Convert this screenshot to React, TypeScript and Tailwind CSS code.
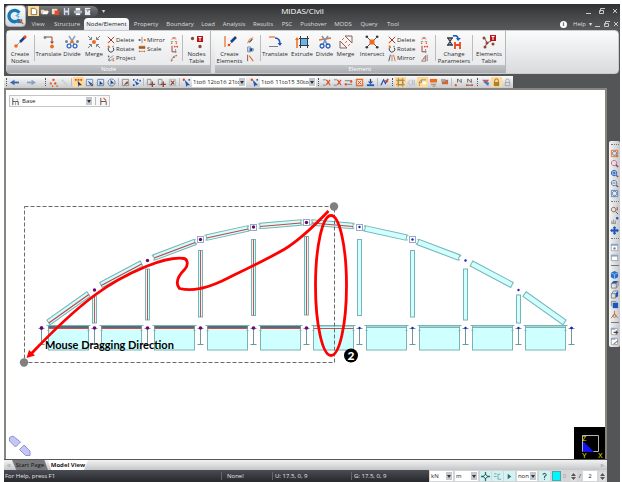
import type { ReactNode } from "react"
import { clsx } from "clsx"

const RED = "#e8481c"
const ORANGE = "#ee6a1f"
const BLUE = "#1d55b8"
const NAVY = "#1c3f8c"
const GRAY = "#7d8288"
const DARK = "#333b47"
const BROWN = "#8a4a38"

// d = path, c = colour, w = stroke width (no width means filled)
type Shape = { d: string; c: string; w?: number }

const dot = (x: number, y: number, r: number, c: string): Shape => ({
  d: `M${x - r} ${y}a${r} ${r} 0 1 0 ${r * 2} 0a${r} ${r} 0 1 0 ${-r * 2} 0`,
  c,
})

const big: Record<string, Shape[]> = {
  createNodes: [
    { d: "M3 11L9 5", c: "#9aa5b5", w: 1 },
    { d: "M7 7L12 2", c: NAVY, w: 2.5 },
    { d: "M11 3L13 1", c: RED, w: 2.5 },
    dot(3, 11, 1.8, ORANGE),
  ],
  translateNodes: [
    { d: "M4 2H10V7", c: BROWN, w: 1 },
    { d: "M8 6.500h4l-2 2.500z", c: BROWN },
    dot(3, 2.5, 1.4, GRAY),
    dot(10, 11.5, 1.9, ORANGE),
  ],
  divideNodes: [
    { d: "M4 1L9 9M10 1L5 9", c: "#8fa3bb", w: 1.5 },
    { d: "M4 9a2 2 0 1 0 .1 0M10 9a2 2 0 1 0 .1 0", c: BLUE, w: 1.2 },
    dot(1.5, 6.5, 1.5, GRAY),
    dot(12.5, 6.5, 1.5, GRAY),
    dot(7, 6.5, 1.6, ORANGE),
  ],
  mergeNodes: [
    { d: "M1 1L4.500 4.500M13 1L9.500 4.500M1 13L4.500 9.500M13 13L9.500 9.500", c: GRAY, w: 1 },
    { d: "M2 4.500H4.500V2M12 4.500H9.500V2M2 9.500H4.500V12M12 9.500H9.500V12", c: GRAY, w: 1 },
    dot(7, 7, 2, ORANGE),
  ],
  nodesTable: [
    { d: "M7 1h6v6H7z", c: "#b5161b" },
    { d: "M8.500 2.500h3M10 2.500V6", c: "#fff", w: 1 },
    dot(2.5, 3.5, 1.7, BROWN),
    dot(10, 11.5, 1.7, BROWN),
  ],
  createElements: [
    { d: "M2 1V12", c: ORANGE, w: 1.2 },
    { d: "M6 10L9 7", c: "#9aa5b5", w: 1 },
    { d: "M8 7L13 2", c: NAVY, w: 2.6 },
    dot(6, 10, 1.3, RED),
  ],
  translateElements: [
    { d: "M1 2H7", c: ORANGE, w: 1.2 },
    { d: "M7 3c4 0 5 2 5 6", c: BLUE, w: 1.6 },
    { d: "M9.500 8h4.500l-2 3z", c: BLUE },
    { d: "M1 11.500H10", c: GRAY, w: 1 },
  ],
  extrude: [
    { d: "M2 13V4", c: ORANGE, w: 1.5 },
    { d: "M0 5h4l-2-3z", c: ORANGE },
    { d: "M5.500 3.500h7v7h-7z", c: "#6cb4e8" },
    { d: "M5.500 1v12M12.500 1v12M4 3.500h10M4 10.500h10", c: DARK, w: 1 },
  ],
  divideElements: [
    { d: "M1 5L13 3", c: ORANGE, w: 1.5 },
    { d: "M4 1L9 9M10 1L5 9", c: "#7893b6", w: 1.5 },
    { d: "M4 9a2 2 0 1 0 .1 0M10 9a2 2 0 1 0 .1 0", c: BLUE, w: 1.3 },
  ],
  mergeElements: [
    { d: "M1 6V13H8zM6 1H13V8z", c: "#8b6060", w: 1 },
    { d: "M8 6L6 8M3 5L5 3M9 11L11 9", c: ORANGE, w: 1 },
  ],
  intersect: [
    { d: "M2 2L12 12M12 2L2 12", c: "#53565b", w: 1 },
    { d: "M4.500 4.500h5v5h-5z", c: ORANGE },
    dot(1.8, 1.8, 1.3, DARK),
    dot(12.2, 1.8, 1.3, DARK),
    dot(1.8, 12.2, 1.3, DARK),
    dot(12.2, 12.2, 1.3, DARK),
  ],
  changeParams: [
    { d: "M0 3H6M0 10H6M1 3L5 10M5 3L1 10", c: DARK, w: 1.3 },
    { d: "M6 1c3-1 5 0 5 3", c: BLUE, w: 1.6 },
    { d: "M9 3h5l-3 3z", c: BLUE },
    { d: "M8 7V14M13 7V14M8 10H13", c: RED, w: 1.8 },
  ],
  elementsTable: [
    { d: "M2 2L5 8L11 5M5 8L3 12", c: BROWN, w: 1 },
    { d: "M8 0h6v6H8z", c: "#b5161b" },
    { d: "M9.500 1.500h3M11 1.500V5", c: "#fff", w: 1 },
    dot(2, 3, 1.5, BROWN),
    dot(5, 8, 1.5, BROWN),
    dot(3, 12, 1.5, BROWN),
    dot(11, 9, 1.5, BROWN),
  ],
}

const small: Record<string, Shape[]> = {
  newFile: [
    { d: "M2.500 1.500h4l2 2v5h-6z", c: "#fff" },
    { d: "M2.500 1.500h4l2 2v5h-6z", c: "#6f6a58", w: 1 },
  ],
  open: [{ d: "M1 3h3l1 1h4v2H3L1 8z", c: "#e6d9b8" }, { d: "M4 5h6L8 8H2z", c: "#fff" }],
  recent: [{ d: "M1 2h6v6H1z", c: "#e8dccb" }, { d: "M4 4h5v5H4z", c: RED }],
  save: [{ d: "M2 1h6v8H2z", c: "#d5dbe4" }, { d: "M3.500 1h3v3h-3zM3.500 6h3v3h-3z", c: "#697484" }],
  print: [{ d: "M3 1h5v3H3z", c: "#fff" }, { d: "M1 4h9v3H1z", c: "#a9b5c7" }, { d: "M3 7h5v2H3z", c: "#fff" }],
  preview: [
    { d: "M1 1h6v8H1z", c: "#e9e9e9" },
    { d: "M4 5a2 2 0 1 1 3 1.500L9 9", c: "#46586e", w: 1 },
    { d: "M2 3h3", c: "#8d8d8d", w: 1 },
  ],
  cross: [{ d: "M1 1L9 9M9 1L2 8", c: "#9a3422", w: 1.2 }, { d: "M1 9L3 7", c: ORANGE, w: 1.5 }],
  rotate: [{ d: "M3 2.500a3.500 3.500 0 1 0 5 1", c: DARK, w: 1.2 }, dot(2, 2, 1.4, ORANGE), dot(7.5, 2, 1, GRAY)],
  project: [{ d: "M2 6L8 2M3 9L9 5", c: GRAY, w: 1 }, dot(2, 3, 1, BROWN), dot(8, 8, 1.2, ORANGE), dot(2.500, 7.500, 1.200, GRAY)],
  mirror: [{ d: "M5 1V9", c: GRAY, w: 1 }, dot(2, 5, 1.4, BROWN), dot(8.5, 5, 1.4, ORANGE)],
  mirrorEl: [{ d: "M5 1V9", c: GRAY, w: 1 }, { d: "M3 1L1 9", c: DARK, w: 1 }, { d: "M7 1L9 9", c: ORANGE, w: 1.2 }],
  scale: [{ d: "M1 1h8v4H1z", c: "#c07a36" }, { d: "M1 3h8", c: "#82502a", w: 1 }, dot(2, 8, 1, ORANGE), dot(8, 8, 1, ORANGE), { d: "M3 8h4", c: GRAY, w: 1 }],
  compact: [{ d: "M3 2h4M1 7h3M6 7h3", c: GRAY, w: 1 }, { d: "M2 4L5 3L8 4", c: ORANGE, w: 1 }, dot(2, 9, 1, RED), dot(8, 9, 1, RED)],
  origin: [{ d: "M2.500 1V8.500H8", c: "#a33b36", w: 1.2 }, dot(6, 2, 1.2, RED), dot(9, 2, 1.2, RED), { d: "M7 5V10", c: GRAY, w: 1 }],
  curve: [{ d: "M2 9Q2 3 8 2", c: GRAY, w: 1 }, dot(2, 8, 1.2, ORANGE), dot(5, 4, 1, BROWN), dot(8, 2, 1, ORANGE)],
  arc: [{ d: "M2 9Q3 3 9 2", c: ORANGE, w: 1.1 }, { d: "M4 8L8 4", c: DARK, w: 1.3 }],
  copyEl: [{ d: "M2 2.500h4v6H2zM4 4.500h5v3H4z", c: "#557ba6", w: 1 }, dot(6.500, 6, 1.500, NAVY)],
  line: [{ d: "M2 1V9", c: BROWN, w: 1.1 }, { d: "M4 2L9 9", c: ORANGE, w: 1.4 }],
  slope: [{ d: "M2 9L7 2V9zM9 1V9", c: "#866", w: 1 }, dot(5, 6, 1, ORANGE)],
  undo: [{ d: "M4 5H10", c: "#3a67ad", w: 2 }, { d: "M5 2V8L0 5z", c: "#3a67ad" }],
  redo: [{ d: "M0 5H6", c: "#8aa0c0", w: 2 }, { d: "M5 2V8L10 5z", c: "#8aa0c0" }],
  dots: [dot(5, 2, 1.3, RED), dot(2, 6, 1.3, ORANGE), dot(7, 6, 1.3, RED), dot(4, 9, 1, ORANGE), dot(9, 9, 1, ORANGE)],
  faint: [dot(3, 3, 1.2, "#c5cad1"), { d: "M4 4L8 8", c: "#c5cad1", w: 1.4 }],
  pick: [{ d: "M1 1h2v2H1zM4 1h2v2H4zM7 1h2v2H7z", c: RED }, { d: "M4 3L9 8H6L5 10z", c: NAVY }],
  window: [{ d: "M1.500 1.500h7v7h-7z", c: "#6f8fb8", w: 1 }, { d: "M3 3L8 6L6 8z", c: BLUE }, dot(8, 8, 1.2, BROWN)],
  poly: [{ d: "M2 1.500H8.500V8.500H1.500V4z", c: "#5a83b7", w: 1 }, { d: "M4 3L8 7H5L4 8z", c: NAVY }],
  circle: [{ d: "M5 1a4 4 0 1 0 .1 0", c: "#5c7ea8", w: 1 }, { d: "M4 2L8 6H5L4 8z", c: NAVY }],
  frame: [{ d: "M1.500 1.500h7v7h-7z", c: "#8b8b8b", w: 1 }, { d: "M3 8L7 3L8 6z", c: BROWN }],
  plane: [{ d: "M3 3L8 6L5 8z", c: BLUE }, dot(2, 2, 1, NAVY), dot(6, 2, 1, BLUE), dot(9, 3, 1, BLUE), dot(2, 8, 1, NAVY)],
  addBox: [{ d: "M1.500 1.500h4v6h-4z", c: "#8c8c8c", w: 1 }, { d: "M7 4v6M4 7h6", c: BROWN, w: 1.5 }],
  unselect: [{ d: "M1.500 1.500h7v7h-7z", c: "#b5b5b5", w: 1 }, { d: "M3 3L7 7M7 3L3 8", c: BROWN, w: 1.3 }],
  cursor: [{ d: "M3 2L9 8H6L5 10z", c: BLUE }, dot(2, 2, 1.4, RED), dot(8, 2, 1, NAVY)],
  activate: [{ d: "M1 2h3M1 8h3M4 2L8 5L4 8", c: GRAY, w: 1 }, { d: "M5 2L9 8M9 2L5 7", c: RED, w: 1.2 }],
  bars: [{ d: "M1 3h8M1 7h8", c: "#75797f", w: 1 }, dot(2, 7, 1.3, RED), dot(8, 4, 1.3, RED)],
  boxX: [{ d: "M1.500 1.500h7v7h-7z", c: ORANGE, w: 1.2 }, { d: "M3 3L7 7M7 3L3 7", c: RED, w: 1 }],
  down: [{ d: "M1 8h8", c: BLUE, w: 2 }, { d: "M5 1v4", c: DARK, w: 1.4 }, { d: "M2 4h6L5 7z", c: BLUE }],
  swap: [{ d: "M1 8L4 2L6 6L9 1", c: BLUE, w: 1.4 }, { d: "M5 3l4-2v4z", c: RED }],
  grid: [{ d: "M2.500 2.500h5v5h-5z", c: "#75643e", w: 1 }, { d: "M0 2.500h10M0 7.500h10M2.500 0v10M7.500 0v10", c: "#a98b4b", w: 1 }],
  hide: [{ d: "M4 2L1 5L4 8M6 2v6M8 2v6", c: "#b1b4b9", w: 1 }],
  shrink: [{ d: "M1.500 9V4L4 2H9M4 2v3H1", c: "#a5905c", w: 1 }, { d: "M5 4h4v3H5z", c: "#fff" }],
  slab: [{ d: "M1 1h8v4H1z", c: ORANGE }, { d: "M2 7h6M4 9h3", c: "#9b7a62", w: 1 }],
  slabAlt: [{ d: "M2 2h7v5H2z", c: "#c76a3e" }, { d: "M1 1h5v3H1z", c: "#a9a9a9" }],
  label: [{ d: "M4 5V1L8 5V1", c: "#5b5b5b", w: 1 }, dot(2, 8, 1.2, RED)],
  labelEl: [{ d: "M3 5V1L7 5V1M2 8h6", c: "#6b5b5b", w: 1 }, dot(2, 8, 1, RED), dot(8, 8, 1, RED)],
  display: [{ d: "M1 2L9 2L6 6z", c: "#c4566a" }, { d: "M2 4L8 9L9 5z", c: "#3c7bb8" }],
  lock: [{ d: "M3 5V3a2 2 0 0 1 4 0V5", c: "#8a6a2c", w: 1 }, { d: "M2 4.500h6V9H2z", c: "#a77f37" }],
  lockOff: [{ d: "M3 5V3a2 2 0 0 1 4 0V5", c: "#a3a3a3", w: 1 }, { d: "M2.500 5h5V8.500h-5z", c: "#a3a3a3", w: 1 }],
  stage: [{ d: "M2 1V9M2 5H8M8 5V9", c: "#4d5055", w: 1 }, { d: "M5 5v4M7 2v2", c: "#9a9a9a", w: 1 }],
  stageEdit: [{ d: "M2 1V9M2 5H8M8 5V9", c: "#4d5055", w: 1 }, { d: "M5 1L8 4", c: RED, w: 1.3 }],
  zoomWin: [{ d: "M1.500 1.500h7v7h-7z", c: ORANGE, w: 1 }, { d: "M5 2.500a2.300 2.300 0 1 0 .1 0M6.500 6.500L9 9", c: "#5d7285", w: 1 }],
  zoomRed: [{ d: "M4.500 1.500a3 3 0 1 0 .1 0", c: "#c4637c", w: 1 }, { d: "M6.500 6.500L9 9", c: "#935", w: 1.5 }],
  zoomIn: [dot(4.5, 4.5, 3, "#a7c9ef"), { d: "M4.500 1.500a3 3 0 1 0 .1 0M3 4.500h3M4.500 3v3", c: BLUE, w: 1 }, { d: "M7 7L9 9", c: BROWN, w: 1.5 }],
  zoomOut: [dot(4.5, 4.5, 3, "#d9e6f4"), { d: "M4.500 1.500a3 3 0 1 0 .1 0M3 4.500h3", c: "#4e729f", w: 1 }, { d: "M7 7L9 9", c: BROWN, w: 1.5 }],
  zoomFit: [{ d: "M1.500 1.500h7v7h-7z", c: "#4f84c2", w: 1 }, dot(5, 5, 2.5, "#dbe8f6"), { d: "M5 2.500a2.500 2.500 0 1 0 .1 0", c: "#5d7285", w: 1 }],
  zoomDyn: [{ d: "M4 1.500a2.500 2.500 0 1 0 .1 0M6 6L9 9M8 1v4", c: "#8a5a4a", w: 1.1 }],
  pan: [{ d: "M2 9V5M4 9V4M6 9V5M2 8h4", c: "#8d8d8d", w: 1 }, dot(8, 2.500, 1.400, BLUE)],
  move: [{ d: "M5 1v8M1 5h8", c: BLUE, w: 2 }, { d: "M3 2.500L5 0L7 2.500zM3 7.500L5 10L7 7.500zM2.500 3L0 5L2.500 7zM7.500 3L10 5L7.500 7z", c: BLUE }],
  viewA: [{ d: "M1.500 1.500h7v7h-7z", c: "#9aa4b0", w: 1 }, { d: "M2 3h6v5H2z", c: "#fff" }, { d: "M1 1h8v2H1z", c: "#86a6cb" }, dot(5, 6, 1.3, "#777")],
  viewB: [{ d: "M2 3h6v5H2z", c: "#fff" }, { d: "M1.500 2.500h7v6h-7z", c: "#9aa4b0", w: 1 }, { d: "M1 2h8v2H1z", c: "#86a6cb" }],
  iso: [{ d: "M1 3L5 1L9 3V8L5 10L1 8z", c: "#2c6fc7" }, { d: "M1 3L5 5L9 3M5 5V10", c: "#93bdf0", w: 1 }],
  top: [{ d: "M1 4L4 1H9L7 4z", c: BLUE }, { d: "M1.500 4H7V9H1.500zM7 4L9 1V6L7 9", c: GRAY, w: 1 }],
  side: [{ d: "M6 4L9 1V7L6 9z", c: BLUE }, { d: "M1.500 4H6V9H1.500zM2 4L4 1H9", c: GRAY, w: 1 }],
  front: [{ d: "M3 3H9V9H3z", c: BLUE }, { d: "M1.500 7V1.500H7", c: GRAY, w: 1 }],
  persp: [{ d: "M5 1V5L1 9M5 5L9 9", c: ORANGE, w: 1.1 }, { d: "M3 6L5 4L7 6L6 8H4z", c: "#888", w: 1 }],
  paneR: [{ d: "M2 2h6v6H2z", c: "#fff" }, { d: "M1.500 1.500h7v7h-7z", c: "#a5a5a5", w: 1 }, { d: "M4 6h5M7 4v4", c: "#444", w: 1.2 }, { d: "M1 1h5v2H1z", c: "#86a6cb" }],
  paneX: [{ d: "M2 2h6v6H2z", c: "#fff" }, { d: "M1.500 1.500h7v7h-7z", c: "#a5a5a5", w: 1 }, { d: "M1 1h5v2H1z", c: "#86a6cb" }, { d: "M4 8L9 4", c: "#777", w: 1.2 }],
  target: [{ d: "M5 0v3M5 7v3M0 5h3M7 5h3", c: "#1e7278", w: 1.4 }, { d: "M5 2.500L7.500 5L5 7.500L2.500 5z", c: "#333", w: 1 }],
  snapC: [{ d: "M1 2h3M1 5h3M8 2.500H5.500V8H9", c: "#6fa5a8", w: 1 }],
  play: [{ d: "M3 2L7 5L3 8z", c: "#2b6d72" }],
  query: [{ d: "M3 3q2-3 4 0q0 1-2 2v2M5 8v1", c: "#2b6d72", w: 1.2 }],
}

function Draw({ shapes, box, className }: { shapes: Shape[]; box: number; className: string }) {
  return (
    <svg viewBox={`0 0 ${box} ${box}`} className={clsx("shrink-0", className)} aria-hidden="true">
      {shapes.map((s, i) => (
        <path key={i} d={s.d} fill={s.w ? "none" : s.c} stroke={s.w ? s.c : "none"} strokeWidth={s.w} />
      ))}
    </svg>
  )
}

function Tool({ icon, on }: { icon: string; on?: boolean }) {
  return (
    <button
      aria-label={icon}
      className={clsx("flex h-[10px] w-[11px] shrink-0 items-center justify-center", on && "bg-[#ffd995]")}
    >
      <Draw shapes={small[icon]} box={10} className="size-[9px]" />
    </button>
  )
}

function BigButton({ icon, label, className }: { icon: string; label: ReactNode; className: string }) {
  return (
    <button className={clsx("flex shrink-0 flex-col items-center gap-[2px] pt-1 text-center leading-[7px] whitespace-nowrap", className)}>
      <Draw shapes={big[icon]} box={14} className="size-[14px]" />
      <span>{label}</span>
    </button>
  )
}

function RowButton({ icon, label }: { icon: string; label?: string }) {
  return (
    <button aria-label={label ?? icon} className="flex h-[9px] items-center gap-px whitespace-nowrap">
      <Draw shapes={small[icon]} box={10} className="size-[8px]" />
      {label}
    </button>
  )
}

const Rule = ({ className }: { className?: string }) => <span className={clsx("w-px shrink-0 bg-[#b9bcc0]", className)} />

function Group({ name, children }: { name: string; children: ReactNode }) {
  return (
    <section className="flex flex-col border-r border-[#b4b6ba]">
      <div className="flex h-[35px] bg-linear-to-b from-[#fafafa] to-[#e9eaec]">{children}</div>
      <h2 className="flex h-[8px] items-center justify-center bg-linear-to-b from-[#c3c5c8] to-[#aaacb0] font-normal text-white">{name}</h2>
    </section>
  )
}

const menus = [
  { name: "View", w: "w-[24px]" },
  { name: "Structure", w: "w-[34px]" },
  { name: "Node/Element", w: "w-[45px]" },
  { name: "Property", w: "w-[34px]" },
  { name: "Boundary", w: "w-[34px]" },
  { name: "Load", w: "w-[22px]" },
  { name: "Analysis", w: "w-[30px]" },
  { name: "Results", w: "w-[28px]" },
  { name: "PSC", w: "w-[20px]" },
  { name: "Pushover", w: "w-[33px]" },
  { name: "MODS", w: "w-[26px]" },
  { name: "Query", w: "w-[26px]" },
  { name: "Tool", w: "w-[22px]" },
]

function WindowButtons({ className }: { className: string }) {
  return (
    <div className={clsx("flex text-[#c9c9c9]", className)}>
      {["M1 6.500h5", "M2.500 4.500V1.500H7M1.500 3.500h4v3h-4z", "M2 2L6 6M6 2L2 6"].map((d, i) => (
        <button key={d} aria-label={["Minimize", "Restore", "Close"][i]}>
          <svg viewBox="0 0 8 8" className="size-[8px]"><path d={d} fill="none" stroke="currentColor" /></svg>
        </button>
      ))}
    </div>
  )
}

function Header() {
  return (
    <header className="flex bg-linear-to-b from-[#2f3032] via-[#434446] via-40% to-[#58595b] text-[#dddddd]">
      <button aria-label="Application menu" className="mt-px ml-px h-[22px] w-[21px] shrink-0 rounded-sm border border-[#a9adb2] bg-linear-to-b from-white to-[#d5dade]">
        <svg viewBox="0 0 20 20" className="size-[19px]">
          <path d="M14 6A6 6 0 1 0 14 13" fill="none" stroke="#1479b8" strokeWidth="3.500" />
          <path d="M14 7L11 9L14 11" fill="none" stroke="#57b5df" strokeWidth="1.500" />
          <path d="M12 13h5v4h-5z" fill="#3b6ea3" />
          <path d="M15 14L18 18" stroke="#db6b2c" strokeWidth="1.500" />
        </svg>
      </button>
      <div className="min-w-0 flex-1">
        <div className="flex h-[14px] items-center">
          <div className="flex flex-1">
            <div className="flex h-[11px] items-center rounded-r-full bg-linear-to-b from-[#77797c] to-[#4b4c4e] pr-1 pl-[2px]">
              <Tool icon="newFile" on />
              {["open", "recent", "save", "print", "preview"].map((n) => <Tool key={n} icon={n} />)}
            </div>
            <span className="pl-1 leading-[10px]">▾</span>
          </div>
          <h1 className="pr-[40px] text-[8px] text-white">MIDAS/Civil</h1>
          <div className="flex flex-1 justify-end pr-[1px]"><WindowButtons className="gap-[5px]" /></div>
        </div>
        <nav className="flex h-[12px]">
          {menus.map((m) => (
            <button
              key={m.name}
              className={clsx(
                "flex shrink-0 items-center justify-center",
                m.w,
                m.name === "Node/Element" && "rounded-t-sm bg-linear-to-b from-white to-[#e4e8ec] text-[#222222]",
              )}
            >
              {m.name}
            </button>
          ))}
          <div className="ml-auto flex items-center gap-[2px]">
            <span className="flex size-[7px] items-center justify-center rounded-full bg-white font-bold text-[#444444]">i</span>
            <button className="flex gap-[3px] pl-[4px]">Help <span>▾</span></button>
            <WindowButtons className="gap-px" />
          </div>
        </nav>
      </div>
    </header>
  )
}

function Ribbon() {
  return (
    <div className="ml-[2px] mr-px flex h-[44px] gap-1 rounded-sm border border-[#c9cbce] bg-linear-to-b from-[#fafbfb] to-[#d9dbdd] text-[#2c2c2c]">
      <Group name="Node">
        <BigButton icon="createNodes" label={<>Create<br />Nodes</>} className="w-[26px]" />
        <Rule className="mx-[1px] my-1" />
        <BigButton icon="translateNodes" label="Translate" className="w-[25px]" />
        <BigButton icon="divideNodes" label="Divide" className="w-[22px]" />
        <BigButton icon="mergeNodes" label="Merge" className="w-[22px]" />
        <div className="w-[33px] pt-1 pl-[2px]">
          <RowButton icon="cross" label="Delete" />
          <RowButton icon="rotate" label="Rotate" />
          <RowButton icon="project" label="Project" />
        </div>
        <div className="w-[30px] pt-1">
          <RowButton icon="mirror" label="Mirror" />
          <RowButton icon="scale" label="Scale" />
        </div>
        <div className="w-[14px] pt-1 pl-[2px]">
          <RowButton icon="compact" />
          <RowButton icon="origin" />
          <RowButton icon="curve" />
        </div>
        <Rule className="my-1" />
        <BigButton icon="nodesTable" label={<>Nodes<br />Table</>} className="w-[27px]" />
      </Group>
      <Group name="Element">
        <BigButton icon="createElements" label={<>Create<br />Elements</>} className="w-[29px]" />
        <div className="w-[16px] pt-1 pl-[2px]">
          <RowButton icon="arc" />
          <RowButton icon="copyEl" />
          <RowButton icon="line" />
        </div>
        <Rule className="my-1" />
        <BigButton icon="translateElements" label="Translate" className="w-[28px]" />
        <BigButton icon="extrude" label="Extrude" className="w-[26px]" />
        <BigButton icon="divideElements" label="Divide" className="w-[19px]" />
        <BigButton icon="mergeElements" label="Merge" className="w-[23px]" />
        <BigButton icon="intersect" label="Intersect" className="w-[30px]" />
        <div className="w-[33px] pt-1 pl-px">
          <RowButton icon="cross" label="Delete" />
          <RowButton icon="rotate" label="Rotate" />
          <RowButton icon="mirrorEl" label="Mirror" />
        </div>
        <div className="w-[15px] pt-1">
          <RowButton icon="compact" />
          <RowButton icon="origin" />
          <RowButton icon="slope" />
        </div>
        <Rule className="my-1" />
        <BigButton icon="changeParams" label={<>Change<br />Parameters</>} className="w-[36px]" />
        <Rule className="my-1" />
        <BigButton icon="elementsTable" label={<>Elements<br />Table</>} className="w-[32px]" />
      </Group>
    </div>
  )
}

function Select({ label, value, className }: { label: string; value: string; className: string }) {
  return (
    <span className={clsx("relative flex h-[10px] shrink-0 bg-white text-[#222222]", className)}>
      <select aria-label={label} className="w-full appearance-none overflow-hidden pr-[6px] pl-px leading-[10px]">
        <option>{value}</option>
      </select>
      <span className="pointer-events-none absolute inset-y-px right-px flex w-[6px] items-center justify-center bg-[#c3c8d0]">
        <svg viewBox="0 0 4 3" className="w-1"><path d="M0 0h4L2 3z" fill="#333" /></svg>
      </span>
    </span>
  )
}

const Grip = () => <span className="mx-[2px] h-2 shrink-0 border-l border-dotted border-[#555555]" />

function Toolbar() {
  return (
    <div className="mt-[2px] flex h-[12px] w-fit items-center bg-linear-to-b from-[#fafafa] to-[#c9cbce]">
      <Grip />
      <div className="flex items-center gap-[6px]"><Tool icon="undo" /><Tool icon="redo" /></div>
      <span className="w-[6px]" />
      <Grip />
      <Tool icon="dots" /><Tool icon="faint" />
      <Rule className="mx-px h-2" />
      <Tool icon="pick" on /><Tool icon="window" /><Tool icon="poly" /><Tool icon="circle" />
      <Rule className="mx-px h-2" />
      <Tool icon="frame" /><Tool icon="plane" />
      <Rule className="mx-px h-2" />
      <Tool icon="addBox" /><Tool icon="addBox" /><Tool icon="unselect" />
      <Rule className="mx-px h-2" />
      <Tool icon="cursor" />
      <Select label="Nodes" value="1to6 12to16 21to26" className="w-[54px]" />
      <span className="w-[3px]" />
      <Tool icon="cursor" />
      <Select label="Elements" value="1to6 11to15 30to35" className="w-[56px]" />
      <Grip />
      <Tool icon="activate" /><Tool icon="activate" /><Tool icon="bars" /><Tool icon="boxX" /><Tool icon="down" />
      <Rule className="mx-px h-2" />
      <Tool icon="swap" />
      <Grip />
      <Tool icon="grid" on /><Tool icon="hide" /><Tool icon="shrink" on /><Tool icon="slab" /><Tool icon="slabAlt" />
      <Rule className="mx-px h-2" />
      <Tool icon="label" /><Tool icon="labelEl" />
      <Grip />
      <Tool icon="display" /><Tool icon="lock" on /><Tool icon="lockOff" />
    </div>
  )
}

// Arch geometry: node x positions and top chord heights
const xs = [41.5, 94.5, 147.5, 200.5, 253.5, 306.5, 359.5, 412.5, 465.5, 518.5, 571.5]
const topY = [328, 290, 260.5, 239.5, 227, 222.5, 227, 239.5, 260.5, 290, 328]
const postTop = [0, 296, 269, 250.5, 239.5, 236.5, 239.5, 250.5, 269, 295, 0]
const postEnd = [0, 323, 320, 317, 315.5, 315, 315.5, 317, 320, 323, 0]
const halfChords = [
  [48.5, 322.5, 88.5, 294],
  [101, 285, 141.5, 263.5],
  [154, 257.5, 195, 242],
  [206.5, 237.5, 248, 228.5],
  [260, 226, 301, 222.5],
]
const chords = [...halfChords, ...halfChords.map(([a, b, c, d]) => [613 - c, d, 613 - a, b]).reverse()]

function Model() {
  return (
    <svg viewBox="6 90 600 368" width="600" height="368" className="absolute top-0 left-0">
      <g fill="#d0ffff" stroke="#78b4b6" strokeWidth="1">
        {xs.slice(0, 10).map((x, i) => (
          <g key={x}>
            <rect x={x + 7} y="326" width="40" height="24" />
            <path d={`M${x + 5} 325.500h44M${x + 6} 330.500h2M${x + 46} 330.500h2`} />
            {i < 6 ? (
              <>
                {i < 5 && <path d={`M${x + 7} 327h40`} stroke="#596b78" strokeWidth="2" />}
                <path d={`M${x + 7} 328.500h40`} stroke="#cf4e4e" />
              </>
            ) : (
              <path d={`M${x + 7} 327.500h40`} />
            )}
          </g>
        ))}
        {xs.map((x) => <path key={x} d={`M${x - 3} 328.500h6M${x} 328V344.500M${x - 3} 344.500h6`} stroke="#6d999c" />)}
        {xs.map((x, i) => postTop[i] > 0 && (
          <g key={x}>
            <rect x={x - 2} y={postTop[i]} width="4" height={postEnd[i] - postTop[i]} />
            {i < 6 && <path d={`M${x} ${postTop[i]}V${postEnd[i]}`} stroke="#cf4e4e" />}
          </g>
        ))}
        {chords.map(([x1, y1, x2, y2], i) => {
          const len = Math.hypot(x2 - x1, y2 - y1)
          return (
            <g key={i} transform={`translate(${x1} ${y1}) rotate(${(Math.atan2(y2 - y1, x2 - x1) * 180) / Math.PI})`}>
              <rect x="0" y="-2.800" width={len} height="5.600" />
              {i < 6 && <path d={`M0 .5H${len}`} stroke="#c94444" strokeWidth="1.200" />}
              {i > 1 && i < 8 && <path d={`M-1 -3v1.500M-1 1.500v1.500M${len + 1} -3v1.500M${len + 1} 1.500v1.500`} />}
            </g>
          )
        })}
      </g>
      {xs.slice(3, 8).map((x, i) => (
        <rect key={x} x={x - 3} y={Math.floor(topY[i + 3]) - 2.5} width="6" height="6" fill="#fff" stroke="#94abc0" />
      ))}
      {xs.map((x, i) => (
        <g key={x} fill={i < 6 ? "#6b0878" : "#1e1ed2"}>
          <circle cx={x} cy="328" r={i < 6 ? 1.8 : 1.2} />
          <circle cx={x} cy={topY[i]} r={i < 6 ? 1.7 : 1.2} />
        </g>
      ))}
      <path d="M24.500 206.500H334.500V362.500H24.500z" fill="none" stroke="#6b6b6b" strokeDasharray="4 2" />
      <circle cx="24" cy="362.500" r="4.200" fill="#808080" />
      <circle cx="334" cy="206.500" r="4.200" fill="#808080" />
      <g fill="none" stroke="#ff0000" strokeWidth="2.800">
        <path d="M328.500 211C316 224 300 240 284 249.500C262 262 238 273 222 281C213 285 204 288 200 288.500C193 290 186 290 179.500 288.500C174 282 180 274 185 269C189 264 187 259 184 258.500C174 257 157 262 146 266.500C128 274 111 283 95 295C72 312 50 334 31 354" strokeLinejoin="round" />
        <ellipse cx="331" cy="285.500" rx="15.500" ry="70" />
      </g>
      <path d="M26.500 358L29 350L35 355.500z" fill="#ff0000" />
      <circle cx="351" cy="355.500" r="7" fill="#000" />
      <text x="351" y="359.500" textAnchor="middle" fill="#fff" className="font-['Lato',sans-serif] text-[12px] font-black">2</text>
      <text x="45" y="349" className="font-['Lato',sans-serif] text-[11px] font-bold">Mouse Dragging Direction</text>
      <g fill="#c5c7f0" stroke="#8d92dc">
        <path d="M9.500 437.500L13 436L20.500 442L15.500 447L9.500 441z" />
        <path d="M19.500 449.500L24 445L30 451V455.500L25.500 455.500z" />
      </g>
    </svg>
  )
}

function AxisCube() {
  return (
    <svg viewBox="0 0 31 32" className="absolute right-0 bottom-0 h-8 w-[31px] bg-black">
      <path d="M8.500 8.500h16v16h-16z" fill="none" stroke="#b5b5b5" />
      <path d="M9 14L20 25H9z" fill="#1313f5" />
      <g fill="#e8e000" className="font-['Liberation_Sans',sans-serif] text-[7px]">
        <text x="8" y="14">Z</text>
        <text x="8" y="31">Y</text>
        <text x="24" y="31">X</text>
      </g>
    </svg>
  )
}

function Spin() {
  return (
    <svg viewBox="0 0 7 9" className="h-[9px] w-[7px] shrink-0 bg-[#dedede]" aria-hidden="true">
      <path d="M1 4L3.500 1L6 4zM1 5L3.500 8L6 5z" fill="#555" />
    </svg>
  )
}

function StatusBar() {
  return (
    <footer className="flex h-[12px] items-center bg-linear-to-b from-[#4a4d54] to-[#26282c] text-[#e6e6e6]">
      <span className="min-w-0 flex-1 pl-px">For Help, press F1</span>
      <span className="w-[51px] border-l border-[#666666] pl-[5px]">None!</span>
      <span className="w-[79px] border-l border-[#666666] pl-[2px]">U: 17.5, 0, 9</span>
      <span className="w-[78px] border-l border-[#666666] pl-[2px]">G: 17.5, 0, 9</span>
      <div className="flex h-full w-[178px] items-center justify-between bg-[#d4d5d7] px-px text-[#222222]">
        <Select label="Force unit" value="kN" className="w-[23px]" />
        <Select label="Length unit" value="m" className="w-[23px]" />
        <span className="flex gap-px">
          {["target", "snapC", "play"].map((n) => (
            <span key={n} className="bg-[#d3f3f3]"><Tool icon={n} /></span>
          ))}
        </span>
        <Select label="Snap" value="non" className="w-[20px]" />
        <span className="bg-[#d3f3f3]"><Tool icon="query" /></span>
        <button aria-label="Colour" className="h-[10px] w-[9px] border border-[#44aaaa] bg-[#00f6ff]" />
        <input aria-label="Current stage" defaultValue="0" className="w-[5px] text-[#999999]" />
        <Spin />
        <span>/</span>
        <input aria-label="Stage count" defaultValue="2" className="h-[10px] w-[14px] bg-white text-center" />
        <Spin />
      </div>
    </footer>
  )
}

const viewTools = [
  ["zoomWin", "zoomRed", "zoomIn", "zoomOut", "zoomFit"],
  ["zoomDyn", "pan", "move"],
  ["viewA", "viewB"],
  ["iso", "top", "side", "front", "persp"],
  ["paneR", "paneX"],
]

function ViewTools() {
  return (
    <aside className="w-[13px] shrink-0 pt-[53px] pl-[2px]">
      <div className="flex flex-col items-center rounded-xs bg-linear-to-r from-[#f7f7f7] to-[#c5c7ca] pb-px">
        {viewTools.map((tools, i) => (
          <div key={i} className="flex flex-col items-center">
            <span className="flex h-[7px] items-center">
              <span className={clsx("w-2 border-t border-[#777777]", i < 3 && "border-dotted")} />
            </span>
            {tools.map((n) => <Tool key={n} icon={n} />)}
          </div>
        ))}
      </div>
    </aside>
  )
}

export default function App() {
  return (
    <div className="flex min-h-screen bg-white pt-1 pr-[2px] pl-1 font-['Open_Sans',sans-serif] text-[6px] leading-[8px]">
      <div className="flex min-w-0 flex-1 flex-col bg-[#545556]">
        <Header />
        <Ribbon />
        <Toolbar />
        <div className="flex flex-1">
          <div className="flex min-w-0 flex-1 flex-col">
            <main className="relative flex-1 overflow-hidden border-t-2 border-r-2 border-l-2 border-[#85867f] bg-white">
              <Model />
              <div className="relative mt-[5px] ml-[3px] flex h-[12px] w-fit items-center border border-[#c5c5c5] bg-[#f7f7f7]">
                <Tool icon="stage" />
                <Select label="Construction stage" value="Base" className="w-[72px]" />
                <Rule className="mx-[2px] h-2" />
                <Tool icon="stageEdit" />
              </div>
              <AxisCube />
            </main>
            <div className="flex h-[11px] items-center border-t border-[#55565a] bg-linear-to-b from-[#f3f3f3] to-[#c4c6c8] text-[#222222]">
              <button className="w-[8px] text-[#777777]">◃</button>
              <button className="h-full w-[36px] bg-[#77787a] text-[#101010] [clip-path:polygon(0_0,90%_0,100%_100%,12%_100%)]">Start Page</button>
              <button className="h-full w-[40px] bg-white font-bold [clip-path:polygon(0_0,100%_0,90%_100%,8%_100%)]">Model View</button>
              <button className="ml-auto w-[10px] text-[#777777]">▹</button>
            </div>
            <StatusBar />
          </div>
          <ViewTools />
        </div>
      </div>
    </div>
  )
}
